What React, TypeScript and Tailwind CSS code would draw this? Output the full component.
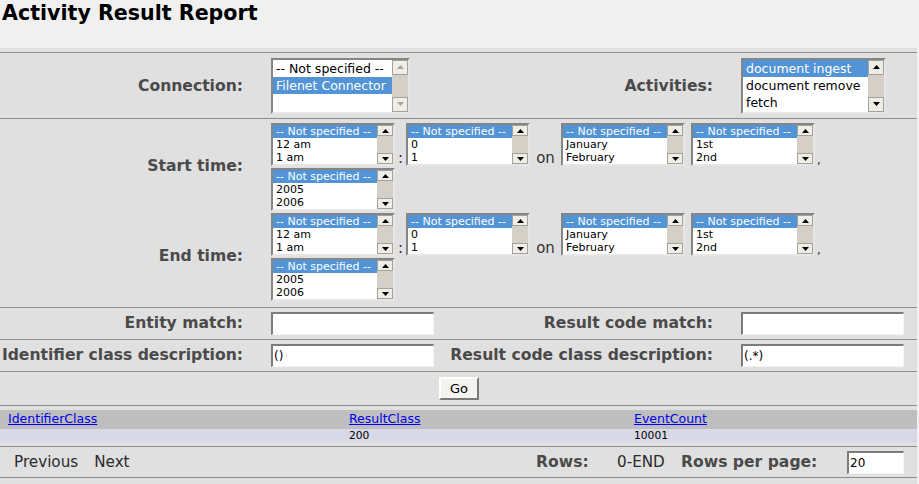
import React from "react";

function Arrow({ up, disabled }: { up: boolean; disabled?: boolean }) {
  return (
    <svg width="7" height="4" viewBox="0 0 7 4">
      <path d={up ? "M0 4 L3.5 0 L7 4Z" : "M0 0 L3.5 4 L7 0Z"} fill={disabled ? "#a9a59d" : "#000"} />
    </svg>
  );
}

function ScrollBar({ big, disabled }: { big?: boolean; disabled?: boolean }) {
  const btn = big
    ? "h-[15px] flex items-center justify-center bg-[#efede8] border border-[#a6a196]"
    : "h-[11px] flex items-center justify-center bg-[#efede8] border border-[#a6a196]";
  return (
    <div className="w-[16px] h-full flex flex-col bg-[#d4d0c8] shrink-0">
      <div className={btn}>
        <Arrow up disabled={disabled} />
      </div>
      <div className="flex-1" />
      <div className={btn}>
        <Arrow up={false} disabled={disabled} />
      </div>
    </div>
  );
}

function ListBox({
  items,
  sel,
  big,
  disabled,
  widthClass,
}: {
  items: string[];
  sel: number;
  big?: boolean;
  disabled?: boolean;
  widthClass: string;
}) {
  const item = big
    ? "h-[17px] leading-[17px] text-[12.5px] pl-[3px] whitespace-nowrap"
    : "h-[13px] leading-[13px] text-[11px] pl-[3px] whitespace-nowrap";
  return (
    <div
      className={`${widthClass} ${big ? "h-[56px]" : "h-[43px]"} flex bg-white border-2 border-t-[#858585] border-l-[#858585] border-r-[#e6e6e6] border-b-[#e6e6e6] overflow-hidden shrink-0`}
    >
      <div className="flex-1 overflow-hidden">
        {items.map((t, i) => (
          <div key={i} className={`${item} ${i === sel ? "bg-[#5294d6] text-white" : "text-black"}`}>
            {t}
          </div>
        ))}
      </div>
      <ScrollBar big={big} disabled={disabled} />
    </div>
  );
}

function TextBox({ value, widthClass }: { value: string; widthClass: string }) {
  return (
    <div
      className={`${widthClass} h-[23px] bg-white border-t-2 border-l-2 border-r border-b border-t-[#7c7c7c] border-l-[#7c7c7c] border-r-[#f4f4f4] border-b-[#f4f4f4] text-[12px] leading-[20px] pl-[1px] text-black whitespace-nowrap`}
    >
      {value}
    </div>
  );
}

const label = "text-[15.6px] font-bold text-[#4a4a4a] text-right pr-[28px] whitespace-nowrap";
const line = "border-t border-[#8c8c8c]";

function TimeRow({ title, years }: { title: string; years: string[] }) {
  const hours = ["-- Not specified --", "12 am", "1 am"];
  const mins = ["-- Not specified --", "0", "1"];
  const months = ["-- Not specified --", "January", "February"];
  const days = ["-- Not specified --", "1st", "2nd"];
  return (
    <div className="grid grid-cols-[271px_1fr]">
      <div className={`${label} flex items-center justify-end`}>{title}</div>
      <div className="flex flex-col gap-[2px]">
        <div className="flex items-end">
          <ListBox items={hours} sel={0} widthClass="w-[124px]" />
          <span className="w-[11px] text-center text-[15px] leading-[16px] text-[#333]">:</span>
          <ListBox items={mins} sel={0} widthClass="w-[124px]" />
          <span className="w-[31px] text-center text-[15px] leading-[15px] text-[#333]">on</span>
          <ListBox items={months} sel={0} widthClass="w-[124px]" />
          <span className="w-[6px]" />
          <ListBox items={days} sel={0} widthClass="w-[124px]" />
          <span className="text-[12px] leading-[12px] text-[#333] pl-[2px]">,</span>
        </div>
        <div className="flex">
          <ListBox items={years} sel={0} widthClass="w-[124px]" />
        </div>
      </div>
    </div>
  );
}

export default function App() {
  return (
    <div className="w-[919px] h-[484px] bg-[#f0f0f0] font-['DejaVu_Sans',sans-serif] overflow-hidden">
      <div className="h-[48px] pl-[2px] pt-[1px]">
        <h1 className="text-[20.6px] leading-[24px] font-bold text-black whitespace-nowrap">Activity Result Report</h1>
      </div>
      <div className="w-[917px] h-[436px] bg-[#e0e0e0] pt-[4px]">
        {/* Row 1 */}
        <div className={`${line} h-[66px] grid grid-cols-[271px_170px_300px_1fr] items-center`}>
          <div className={`${label} pt-[2px]`}>Connection:</div>
          <div>
            <ListBox
              items={["-- Not specified --", "Filenet Connector"]}
              sel={1}
              big
              disabled
              widthClass="w-[139px]"
            />
          </div>
          <div className={`${label} pt-[2px]`}>Activities:</div>
          <div>
            <ListBox
              items={["document ingest", "document remove", "fetch"]}
              sel={0}
              big
              widthClass="w-[145px]"
            />
          </div>
        </div>
        {/* Time rows */}
        <div className={`${line} h-[189px] pt-[4px] flex flex-col gap-[2px]`}>
          <TimeRow title="Start time:" years={["-- Not specified --", "2005", "2006"]} />
          <TimeRow title="End time:" years={["-- Not specified --", "2005", "2006"]} />
        </div>
        {/* Entity match */}
        <div className={`${line} h-[32px] grid grid-cols-[271px_170px_300px_1fr] items-center`}>
          <div className={label}>Entity match:</div>
          <div>
            <TextBox value="" widthClass="w-[163px]" />
          </div>
          <div className={label}>Result code match:</div>
          <div>
            <TextBox value="" widthClass="w-[163px]" />
          </div>
        </div>
        {/* Class description */}
        <div className={`${line} h-[32px] grid grid-cols-[271px_170px_300px_1fr] items-center`}>
          <div className={label}>Identifier class description:</div>
          <div>
            <TextBox value="()" widthClass="w-[163px]" />
          </div>
          <div className={label}>Result code class description:</div>
          <div>
            <TextBox value="(.*)" widthClass="w-[163px]" />
          </div>
        </div>
        {/* Go */}
        <div className={`${line} h-[34px] flex items-center pl-[439px]`}>
          <button className="w-[40px] h-[23px] bg-[#f4f3ef] border-2 border-t-[#ffffff] border-l-[#ffffff] border-r-[#7a7a7a] border-b-[#7a7a7a] text-[13px] leading-[19px] text-black">
            Go
          </button>
        </div>
        {/* Results */}
        <div className={`${line} h-[41px] pt-[4px]`}>
          <div className="h-[19px] bg-[#bebebe] grid grid-cols-[349px_285px_1fr] items-center text-[12.5px]">
            <a className="pl-[8px] text-[#0000ee] underline" href="#">
              <span>IdentifierClass</span>
            </a>
            <div>
              <a className="text-[#0000ee] underline" href="#">ResultClass</a>
            </div>
            <div>
              <a className="text-[#0000ee] underline" href="#">EventCount</a>
            </div>
          </div>
          <div className="h-[13px] bg-[#d8d8e6] grid grid-cols-[349px_285px_1fr] items-center text-[10.7px] leading-[13px] text-black">
            <div />
            <div>200</div>
            <div>10001</div>
          </div>
        </div>
        {/* Bottom */}
        <div className={`${line} h-[32px] flex items-center border-b`}>
          <div className="w-[536px] pl-[14px] flex gap-[16px] text-[15.2px] text-[#2a2a2a] pt-[1px]">
            <span>Previous</span>
            <span>Next</span>
          </div>
          <span className="w-[81px] text-[15.6px] font-bold text-[#4a4a4a] whitespace-nowrap pt-[1px]">Rows:</span>
          <span className="w-[64px] text-[15.2px] text-[#2a2a2a] whitespace-nowrap pt-[1px]">0-END</span>
          <span className="w-[166px] text-[15.6px] font-bold text-[#4a4a4a] whitespace-nowrap pt-[1px]">Rows per page:</span>
          <TextBox value="20" widthClass="w-[57px]" />
        </div>
      </div>
    </div>
  );
}
